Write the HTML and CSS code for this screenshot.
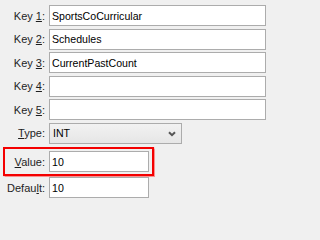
FILE: index.html
```html
<!DOCTYPE html>
<html>
<head>
<meta charset="utf-8">
<link rel="stylesheet" href="styles.css">
</head>
<body>
<div class="form">
  <div class="row"><label class="lbl">Key <u>1</u>:</label><input class="field wide" type="text" value="SportsCoCurricular"></div>
  <div class="row"><label class="lbl">Key <u>2</u>:</label><input class="field wide" type="text" value="Schedules"></div>
  <div class="row"><label class="lbl">Key <u>3</u>:</label><input class="field wide" type="text" value="CurrentPastCount"></div>
  <div class="row"><label class="lbl">Key <u>4</u>:</label><input class="field wide" type="text" value=""></div>
  <div class="row"><label class="lbl">Key <u>5</u>:</label><input class="field wide" type="text" value=""></div>
  <div class="row"><label class="lbl"><u>T</u>ype:</label>
    <div class="combo"><span>INT</span>
      <svg class="chev" width="8" height="6" viewBox="0 0 8 6"><path d="M1 1.2 L4 4.2 L7 1.2" fill="none" stroke="#555" stroke-width="2"/></svg>
    </div>
  </div>
  <div class="row highlight"><label class="lbl"><u>V</u>alue:</label><input class="field short" type="text" value="10"></div>
  <div class="row last"><label class="lbl">Defau<u>l</u>t:</label><input class="field short" type="text" value="10"></div>
</div>
</body>
</html>
```

FILE: styles.css
```css
html, body {
  margin: 0;
  padding: 0;
  background: #f0f0f0;
}
body {
  font-family: "Liberation Sans", Arial, sans-serif;
  font-size: 11px;
  color: #000;
  width: 271px;
  height: 202px;
  overflow: hidden;
}
.form {
  display: flex;
  flex-direction: column;
  gap: 2.5px;
  padding-top: 5px;
}
.row {
  display: flex;
  align-items: center;
  height: 21px;
  position: relative;
}
.lbl {
  width: 45px;
  margin-right: 4px;
  text-align: right;
  white-space: nowrap;
  color: #1e1e1e;
}
.lbl u {
  text-decoration-thickness: 1px;
  text-underline-offset: 1px;
}
.field {
  box-sizing: border-box;
  height: 21px;
  margin: 0;
  border: 1px solid #acacac;
  background: #fff;
  padding: 0 2px;
  font-family: "Liberation Sans", Arial, sans-serif;
  font-size: 10.6px;
  color: #000;
  outline: none;
}
.wide { width: 217px; }
.short { width: 100px; }
.combo {
  box-sizing: border-box;
  width: 133px;
  height: 21px;
  border: 1px solid #acacac;
  background: linear-gradient(#f2f2f2, #e6e6e6);
  display: flex;
  align-items: center;
  justify-content: space-between;
  padding: 0 5px 0 3px;
  font-size: 10.6px;
}
.chev { display: block; margin-top: 1px; }
.highlight { margin-top: 5px; }
.highlight::before {
  content: "";
  position: absolute;
  left: 3px;
  top: -4px;
  width: 151px;
  height: 29px;
  box-sizing: border-box;
  border: 2px solid #f40000;
  box-shadow: 0 0 1px 0.5px rgba(255, 80, 80, 0.6);
  pointer-events: none;
}
.last { margin-top: 2.5px; }
```
